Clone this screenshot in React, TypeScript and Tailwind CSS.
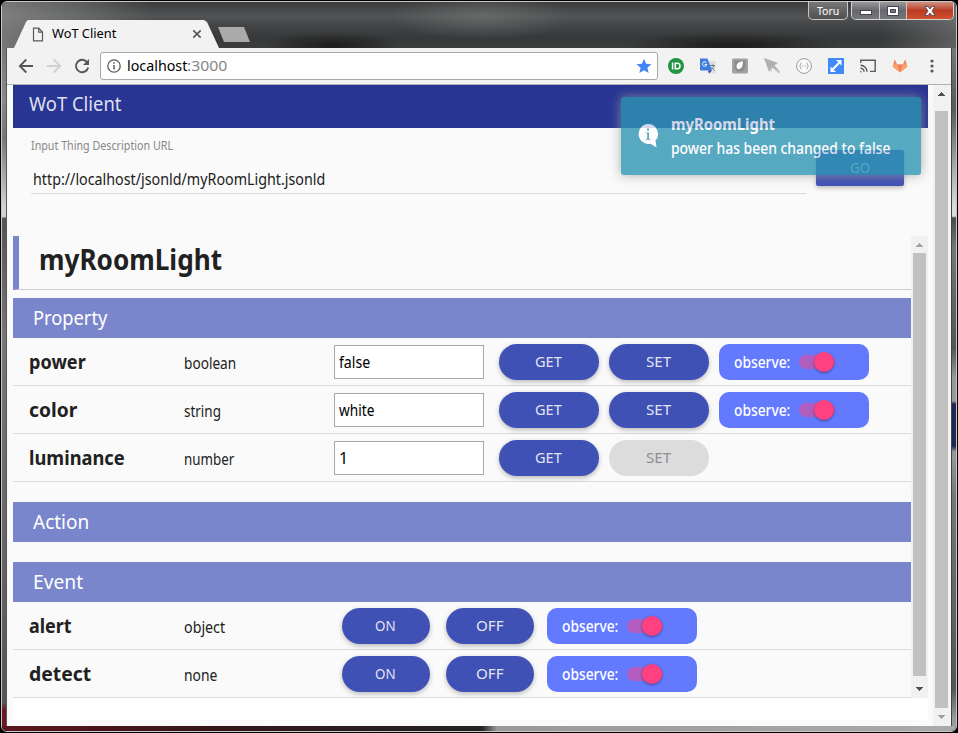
import React, { useLayoutEffect, useRef, useState } from "react";

/* A single line of text that is condensed or widened to a given width. */
function Fit({ w, children, className = "" }: { w: number; children: string; className?: string }) {
  const ref = useRef<HTMLSpanElement>(null);
  const [scale, setScale] = useState(1);
  useLayoutEffect(() => {
    if (ref.current) setScale(w / ref.current.offsetWidth);
  }, [w]);
  return (
    <span className={`block shrink-0 whitespace-nowrap ${className}`} style={{ width: w }}>
      <span ref={ref} className="inline-block origin-left" style={{ transform: `scaleX(${scale})` }}>
        {children}
      </span>
    </span>
  );
}

function Arrow({ up = false, dim = false }: { up?: boolean; dim?: boolean }) {
  return (
    <svg viewBox="0 0 17 17" className="h-[17px] w-[17px]" shapeRendering="crispEdges" fill={dim ? "#a3a3a3" : "#505050"}>
      {up ? <path d="M8 7h1v1h1v1h1v1h1v1H5v-1h1V9h1V8h1z" /> : <path d="M5 7h7v1h-1v1h-1v1H9v1H8v-1H7V9H6V8H5z" />}
    </svg>
  );
}

function RoundButton({ label, w, size, off = false }: { label: string; w: number; size: string; off?: boolean }) {
  return (
    <button
      className={`flex h-9 shrink-0 items-center justify-center rounded-[18px] pr-[2px] text-[14px] leading-9 ${size} ${
        off ? "bg-[#dcdcdc] text-[#8f8f8f]" : "bg-[#3f51b5] text-white/87 shadow-[0_2px_5px_rgba(0,0,0,0.26)]"
      }`}
    >
      <Fit w={w}>{label}</Fit>
    </button>
  );
}

function Observe() {
  return (
    <div className="flex h-9 w-[150px] shrink-0 items-center rounded-[10px] bg-[#637aff] pl-[15px] text-[16px] leading-9 font-medium text-white">
      <Fit w={56}>observe:</Fit>
      <div className="ml-[9px] flex h-[14px] w-9 items-center rounded-full bg-[#ff4081]/50 pl-[15px]">
        <div className="h-5 w-5 shrink-0 rounded-full bg-[#ff4081] shadow-[0_1px_3px_rgba(0,0,0,0.4)]" />
      </div>
    </div>
  );
}

function Section({ title, w }: { title: string; w: number }) {
  return (
    <div className="flex h-10 items-center bg-[#7986cb] pl-[20px] text-[20px] leading-10 text-white">
      <Fit w={w}>{title}</Fit>
    </div>
  );
}

function Row({ name, nw, type, tw, children }: { name: string; nw: number; type: string; tw: number; children: React.ReactNode }) {
  return (
    <div className="flex h-12 items-center border-b border-[#dcdcdc] pl-4 text-[#212121]">
      <div className="w-[155px] shrink-0 text-[20px] leading-[46px] font-bold">
        <Fit w={nw}>{name}</Fit>
      </div>
      <div className="h-[46px] shrink-0 text-[16px] leading-[49px]">
        <Fit w={tw}>{type}</Fit>
      </div>
      <div className="ml-auto flex items-center">{children}</div>
    </div>
  );
}

const properties = [
  { name: "power", nw: 57, type: "boolean", tw: 52, value: "false", vw: 31, writable: true },
  { name: "color", nw: 48, type: "string", tw: 37, value: "white", vw: 35, writable: true },
  { name: "luminance", nw: 96, type: "number", tw: 50, value: "1", vw: 9, writable: false },
];
const events = [
  { name: "alert", nw: 43, type: "object", tw: 41 },
  { name: "detect", nw: 62, type: "none", tw: 33 },
];

function TitleBar() {
  return (
    <div className="flex h-[46px] shrink-0 bg-[radial-gradient(ellipse_90px_24px_at_480px_14px,rgba(130,132,132,0.45),transparent),radial-gradient(ellipse_70px_14px_at_330px_44px,rgba(15,15,15,0.7),transparent),radial-gradient(ellipse_110px_14px_at_730px_44px,rgba(15,15,15,0.7),transparent),linear-gradient(90deg,rgba(150,150,150,0.65)_0,rgba(140,140,140,0.4)_80px,transparent_150px,transparent_880px,rgba(150,150,150,0.4)_954px),linear-gradient(180deg,#3a3b3c_0,#515354_14px,#424446_24px,#373839_36px,#3d3e3e_46px)]">
      <div className="ml-3 flex h-7 w-[205px] items-center self-end bg-[#f2f2f2] pl-[18px] [clip-path:polygon(0_100%,12px_2px,14px_0,190px_0,193px_2px,100%_100%)]">
        <svg viewBox="0 0 12 15" className="h-[15px] w-3" fill="none" stroke="#5a5a5a" strokeWidth="1.2">
          <path d="M1.5 1.2h5.2l3.8 3.9v8.7h-9zM6.7 1.2v3.9h3.8" />
        </svg>
        <div className="mb-[2px] ml-2 text-[13px] leading-[26px] text-black">
          <Fit w={64}>WoT Client</Fit>
        </div>
        <svg viewBox="0 0 10 10" className="ml-auto mr-[17px] h-[10px] w-[10px]" stroke="#5a5a5a" strokeWidth="1.7">
          <path d="M1.3 1.3l7.4 7.4M8.7 1.3L1.3 8.700" />
        </svg>
      </div>
      <div className="-ml-px mt-[25px] h-[15px] w-8 bg-[#aaa] [clip-path:polygon(0_0,26px_0,100%_100%,6px_100%)]" />
      <div className="ml-auto mr-[2px] flex h-[18px] gap-[3px] text-[11px] leading-[18px] text-white">
        <div className="flex w-10 justify-center rounded-b-[5px] border border-t-0 border-[#c9c9c9] bg-linear-to-b from-[#777] to-[#505050]">
          <Fit w={22}>Toru</Fit>
        </div>
        <div className="flex w-[103px] overflow-hidden rounded-b-[5px] border border-t-0 border-[#d4d4d4]">
          <div className="flex w-[28px] items-center justify-center border-r border-[#c9c9c9] bg-linear-to-b from-[#9a9a9c] via-[#66686b] to-[#75777a]">
            <div className="mt-1 h-[5px] w-3 border border-[#444] bg-white" />
          </div>
          <div className="flex w-[27px] items-center justify-center border-r border-[#c9c9c9] bg-linear-to-b from-[#9a9a9c] via-[#66686b] to-[#75777a]">
            <svg viewBox="0 0 12 10" className="h-[10px] w-3"><path d="M.5.5h11v9H.5z" fill="#fff" stroke="#445" /><path d="M3.5 3.5h5v3h-5z" fill="#777" stroke="#445" /></svg>
          </div>
          <div className="flex flex-1 items-center justify-center bg-linear-to-b from-[#cf9080] via-[#b93a22] to-[#d3512f]">
            <svg viewBox="0 0 12 10" className="h-[10px] w-3"><path d="M1 .5h3l2 2.500L8 .5h3L8 5l3 4.500H8L6 7 4 9.500H1L4 5z" fill="#fff" stroke="#445" strokeWidth=".8" /></svg>
          </div>
        </div>
      </div>
    </div>
  );
}

function Slot({ children }: { children: React.ReactNode }) {
  return <div className="flex w-8 shrink-0 items-center justify-center">{children}</div>;
}

function Toolbar() {
  return (
    <div className="flex h-[37px] shrink-0 items-center border-b border-[#b0b0b0] bg-[#f2f2f2] pl-[11px]">
      <svg viewBox="0 0 16 16" className="h-4 w-4" fill="none" stroke="#555" strokeWidth="1.800"><path d="M15 8H2.500M8.300 1.500L1.800 8l6.500 6.500" /></svg>
      <svg viewBox="0 0 16 16" className="ml-3 h-4 w-4" fill="none" stroke="#d0d0d0" strokeWidth="1.800"><path d="M1 8h12.500M7.700 1.500L14.200 8l-6.500 6.500" /></svg>
      <svg viewBox="0 0 16 16" className="ml-3 h-4 w-4" fill="none" stroke="#555" strokeWidth="1.900"><path d="M13.300 4.500A6.200 6.200 0 1 0 14.200 9.500" /><path d="M15 1v6H9z" fill="#555" stroke="none" /></svg>
      <div className="ml-[10px] flex h-7 w-[558px] items-center rounded-[3px] border border-[#a8a8a8] bg-white pl-[6px]">
        <svg viewBox="0 0 14 14" className="h-[14px] w-[14px]" fill="none" stroke="#5a5a5a"><circle cx="7" cy="7" r="6.200" strokeWidth="1.300" /><path d="M7 6v4.500M7 3.300v1.500" strokeWidth="1.500" /></svg>
        <div className="mb-[2px] ml-[6px] flex text-[15px] leading-[26px]">
          <Fit w={60} className="text-black">localhost</Fit>
          <Fit w={40} className="text-[#858585]">:3000</Fit>
        </div>
        <svg viewBox="0 0 16 16" className="ml-auto mr-[5px] h-4 w-4" fill="#4285f4"><path d="M8 .8l2.100 5 5.400.4-4.100 3.500 1.300 5.300L8 12.200 3.300 15l1.300-5.300L.5 6.200l5.400-.4z" /></svg>
      </div>
      <div className="ml-[2px] flex">
        <Slot>
          <svg viewBox="0 0 16 16" className="h-4 w-4"><circle cx="8" cy="8" r="8" fill="#229342" /><path d="M4.600 4.500v7M7.300 5.200h1.900a2.800 2.800 0 0 1 0 5.600H7.300z" fill="none" stroke="#fff" strokeWidth="1.500" /></svg>
        </Slot>
        <Slot>
          <svg viewBox="0 0 16 16" className="h-4 w-4">
            <path d="M6 3h9.500v12.500H9z" fill="#dedede" /><path d="M0 .5h7.500L12 12.500H1a1 1 0 0 1-1-1z" fill="#3f7de0" /><path d="M8 12.500h4l-3 3z" fill="#2a3fbf" />
            <path d="M6.500 4.800A2.200 2.200 0 1 0 6.800 6.500H4.800" fill="none" stroke="#fff" /><path d="M10 7.500h5M12.500 6.500v1M14 7.500c-.5 2-2 3.500-3 4M11.500 9.500l3 3" fill="none" stroke="#6d7b85" />
          </svg>
        </Slot>
        <Slot>
          <svg viewBox="0 0 16 16" className="h-4 w-4"><rect y=".5" width="16" height="15" rx="1.500" fill="#a2a2a2" /><path d="M2.500 2.500h11v7l-3 4h-5l-3-3z" fill="#8c8c8c" /><path d="M11 3.500C7 3.500 4.500 5.500 4.500 8.500c0 2 1.500 3 3 2.500 2.500-1 3.500-4 3.500-7.500z" fill="#fff" /></svg>
        </Slot>
        <Slot>
          <svg viewBox="0 0 16 16" className="h-4 w-4"><path d="M0 0l14 5.500-3.500 2L16 13v2h-2L8 9.500V15z" fill="#cfcfcf" /><path d="M0 0l14 5-4 2 5.500 7-7.500-5-3 5z" fill="#b0b0b0" /></svg>
        </Slot>
        <Slot>
          <svg viewBox="0 0 16 16" className="h-4 w-4" fill="none" stroke="#999"><circle cx="8" cy="8" r="7.400" fill="#fafafa" /><path d="M5.500 5C4 5 5.200 7.500 3.500 8c1.700.5.500 3 2 3M10.500 5c1.500 0 .3 2.500 2 3-1.700.5-.5 3-2 3M6 8h.8M7.700 8h.8M9.400 8h.8" /></svg>
        </Slot>
        <Slot>
          <svg viewBox="0 0 16 16" className="h-4 w-4"><rect width="16" height="16" fill="#3f8bfa" /><path d="M8 2h5.500v5.500zM8 14H2.500V8.500z" fill="#fff" /><path d="M4.500 11.500l7-7" stroke="#fff" strokeWidth="2" /></svg>
        </Slot>
        <Slot>
          <svg viewBox="0 0 16 14" className="h-[14px] w-4" fill="none" stroke="#5a5a5a" strokeWidth="1.400"><path d="M.8 4V1.200h14.400v11.200H10M.5 6.200a6.600 6.600 0 0 1 6.600 6.600M.5 9.200a3.600 3.600 0 0 1 3.600 3.600" /><path d="M.3 11.500l2 1.800h-2z" fill="#5a5a5a" stroke="none" /></svg>
        </Slot>
        <Slot>
          <svg viewBox="0 0 16 14" className="h-[14px] w-4"><path d="M2.800.5L5 5.500h6L13.200.5 15.500 8 8 13.500.5 8z" fill="#fca36b" /><path d="M5 5.500h6L8 13.500z" fill="#ef7d60" /><path d="M2.800.5L5 5.500H1.300zM13.200.5l1.500 5H11z" fill="#f0896a" /></svg>
        </Slot>
        <Slot>
          <svg viewBox="0 0 4 14" className="h-[14px] w-1" fill="#5a5a5a"><circle cx="2" cy="2" r="1.600" /><circle cx="2" cy="7" r="1.600" /><circle cx="2" cy="12" r="1.600" /></svg>
        </Slot>
      </div>
    </div>
  );
}

function Toast() {
  return (
    <div className="absolute top-[12px] left-[614px] flex h-[78px] w-[300px] rounded-[3px] bg-[#2f96b4] pt-[15px] pl-[17px] text-[16px] leading-6 text-white opacity-80 shadow-[0_0_12px_#999]">
      <svg viewBox="0 0 21 24" className="mt-3 h-6 w-[21px]">
        <path d="M10 0a10 10 0 0 1 7.500 16.600L18.500 23.500l-6-3.700A10 10 0 1 1 10 0z" fill="#fff" />
        <path d="M9 4.500h2V6.500H9zM8 8.500h3V15h1.500v.8H7.700V15h1.500V9.300H8z" fill="#2f96b4" />
      </svg>
      <div className="ml-3">
        <Fit w={104} className="font-bold">myRoomLight</Fit>
        <Fit w={219} className="font-medium">power has been changed to false</Fit>
      </div>
    </div>
  );
}

export default function App() {
  return (
    <div className="h-[733px] w-[958px] overflow-hidden bg-black p-px font-['Noto_Sans',sans-serif]">
      <div className="flex h-[731px] flex-col overflow-hidden rounded-[6px] border border-[#c9c9c9]">
        <TitleBar />
        <div className="flex h-[678px]">
          <div className="w-[5px] shrink-0 border-r border-[#555] bg-[linear-gradient(180deg,#777_0,#8a8a8a_50px,#777_90px,#d6d2d2_160px,#d6d2d2_169px,#555_170px,#777_290px,#666_500px,#555_655px,#6b1820_662px,#6b1820_678px)]" />
          <div className="relative flex w-[944px] flex-col">
            <Toolbar />
            <div className="relative flex h-[641px] bg-[#fafafa]">
              <div className="ml-[6px] w-[915px] shrink-0">
                <div className="flex h-[43px] bg-[#283593] pl-4 text-[20px] leading-[37px] text-white/87">
                  <Fit w={92}>WoT Client</Fit>
                </div>
                <div className="flex h-[108px]">
                  <div className="ml-[18px] h-[66px] w-[775px] border-b border-[#dcdcdc]">
                    <div className="pt-[7px] text-[12px] leading-[21px] text-[#888]"><Fit w={142}>Input Thing Description URL</Fit></div>
                    <div className="pt-[11px] pl-[2px] text-[16px] leading-6 text-[#212121]"><Fit w={292}>http://localhost/jsonld/myRoomLight.jsonld</Fit></div>
                  </div>
                  <button className="mt-[22px] ml-[10px] flex h-9 w-[88px] justify-center rounded-[2px] bg-[#3f51b5] text-[14px] leading-9 text-white/87 shadow-[0_2px_5px_rgba(0,0,0,0.26)]">
                    <Fit w={20}>GO</Fit>
                  </button>
                </div>
                <div className="flex h-[462px]">
                  <div className="w-[898px]">
                    <div className="mb-2 flex h-[54px] border-b border-l-[6px] border-b-[#ccc] border-l-[#7986cb] pl-[20px] text-[28px] leading-[47px] font-bold text-[#212121]">
                      <Fit w={183}>myRoomLight</Fit>
                    </div>
                    <Section title="Property" w={74} />
                    {properties.map((p) => (
                      <Row key={p.name} {...p}>
                        <div className="flex h-[34px] w-[150px] shrink-0 border border-[#a9a9a9] bg-white pl-1 text-[16px] leading-[33px] text-black">
                          <Fit w={p.vw}>{p.value}</Fit>
                        </div>
                        <div className="ml-[15px] flex w-[412px] gap-[10px]">
                          <RoundButton label="GET" w={27} size="w-[100px]" />
                          <RoundButton label="SET" w={25} size="w-[100px]" off={!p.writable} />
                          {p.writable && <Observe />}
                        </div>
                      </Row>
                    ))}
                    <div className="mt-5" />
                    <Section title="Action" w={56} />
                    <div className="mt-5" />
                    <Section title="Event" w={50} />
                    {events.map((e) => (
                      <Row key={e.name} {...e}>
                        <RoundButton label="ON" w={21} size="w-[88px] mr-4" />
                        <RoundButton label="OFF" w={27} size="w-[88px] mr-[13px]" />
                        <div className="w-[364px]"><Observe /></div>
                      </Row>
                    ))}
                  </div>
                  <div className="flex w-[17px] flex-col items-center bg-[#f1f1f1]">
                    <Arrow up dim />
                    <div className="h-[423px] w-[13px] bg-[#c1c1c1]" />
                    <div className="mt-1"><Arrow /></div>
                  </div>
                </div>
                <div className="h-[22px] bg-white" />
              </div>
              <div className="ml-[5px] flex w-[17px] shrink-0 flex-col items-center bg-[#f1f1f1]">
                <div className="h-[26px]"><Arrow up /></div>
                <div className="h-[597px] w-[13px] shrink-0 bg-[#c1c1c1]" />
                <Arrow dim />
              </div>
              <Toast />
            </div>
          </div>
          <div className="w-[5px] shrink-0 border-l border-[#444] bg-[linear-gradient(180deg,#777_0,#5a5a5a_60px,#ddd_160px,#ddd_168px,#4a4a4a_170px,#777_200px,#555_300px,#999_330px,#999_353px,#1f2555_356px,#1f2555_398px,#999_404px,#777_450px,#555_640px,#999_670px)]" />
        </div>
        <div className="h-[5px] bg-[linear-gradient(90deg,#5b161c_0,#33161a_220px,#222_480px,#999_495px,#aaa_954px)]" />
      </div>
    </div>
  );
}
